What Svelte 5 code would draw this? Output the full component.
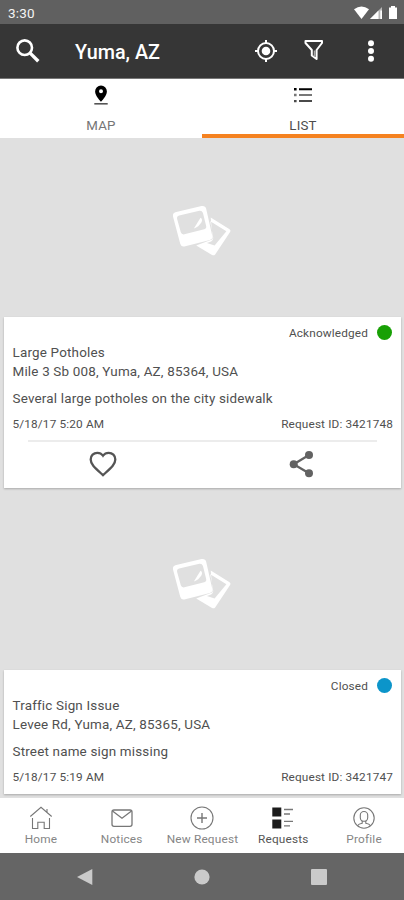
<script>
	const requests = [
		{
			id: '3421748',
			title: 'Large Potholes',
			address: 'Mile 3 Sb 008, Yuma, AZ, 85364, USA',
			description: 'Several large potholes on the city sidewalk',
			date: '5/18/17 5:20 AM',
			status: 'Acknowledged',
			actions: true
		},
		{
			id: '3421747',
			title: 'Traffic Sign Issue',
			address: 'Levee Rd, Yuma, AZ, 85365, USA',
			description: 'Street name sign missing',
			date: '5/18/17 5:19 AM',
			status: 'Closed',
			actions: false
		}
	];

	const navItems = ['Home', 'Notices', 'New Request', 'Requests', 'Profile'];

	let tab = 'list';
	let page = 'Requests';
</script>

<div class="app">
	<div class="status-bar">
		<span>3:30</span>
		<svg width="46" height="14" viewBox="0 0 46 14" fill="#fff">
			<path d="M0 3.2Q7.5-2.4 15 3.2L7.5 13z" />
			<path d="M16 13L28 1v12z" fill-opacity=".55" />
			<path d="M16 13L24.5 4.5V13zM26.3 4.5h1.7V13h-1.7z" />
			<path d="M35 1.5h2V0h4v1.5h2V13h-8z" />
		</svg>
	</div>

	<header>
		<svg class="search" width="26" height="26" viewBox="0 0 26 26" fill="none" stroke="#fff">
			<circle cx="9.7" cy="9.7" r="7.3" stroke-width="2.6" />
			<path d="M14.9 14.9L23.3 23.3" stroke-width="3.4" />
		</svg>
		<h1>Yuma, AZ</h1>
		<svg class="locate" width="24" height="24" viewBox="0 0 24 24" fill="none" stroke="#fff" stroke-width="2">
			<circle cx="12" cy="12" r="8" />
			<circle cx="12" cy="12" r="4.3" fill="#fff" stroke="none" />
			<path d="M12 1v3M12 20v3M1 12h3M20 12h3" />
		</svg>
		<svg class="filter" width="20" height="22" viewBox="0 0 20 22" fill="none" stroke="#fff" stroke-width="2" stroke-linejoin="round">
			<path d="M1.5 2h16.5v2L12.6 11v9L7.8 16.5V11L1.5 4z" />
			<path d="M10.5 11.5v6" stroke="#aaa" stroke-width="1.6" />
		</svg>
		<svg class="more" width="8" height="24" viewBox="0 0 8 24" fill="#fff">
			<circle cx="4" cy="4.2" r="3" />
			<circle cx="4" cy="12" r="3" />
			<circle cx="4" cy="19.8" r="3" />
		</svg>
	</header>

	<div class="tabs">
		<button class:active={tab === 'map'} on:click={() => (tab = 'map')}>
			<svg width="20" height="22" viewBox="0 0 20 22">
				<path d="M10 .6a5.9 5.9 0 0 0-5.9 5.9C4.1 10.8 10 16.8 10 16.8s5.9-6 5.9-10.3A5.9 5.9 0 0 0 10 .6zm0 7.7a2 2 0 1 1 0-4A2 2 0 0 1 10 8.3z" />
				<path d="M3.3 18h13.4v1.6H3.3z" fill="#555" />
			</svg>
			<span>MAP</span>
		</button>
		<button class:active={tab === 'list'} on:click={() => (tab = 'list')}>
			<svg width="20" height="22" viewBox="0 0 20 22">
				<path d="M1 3h2.6v2.5H1zM6 3.3h13v2H6z" />
				<path d="M1 8.8h2.6v2.4H1zM6 9h13v2H6z" fill="#777" />
				<path d="M1 15h2.6v2.3H1zM6 15.1h13v2H6z" fill="#4a4a4a" />
			</svg>
			<span>LIST</span>
		</button>
	</div>

	<main>
		{#each requests as request}
			<section>
				<div class="photo">
					<svg width="60" height="54" viewBox="0 0 62 54">
						<path
							fill="#fff"
							fill-rule="evenodd"
							d="M40 13L59.5 25.2Q61 26.3 60.2 27.8L44.6 51.2Q43.2 52.8 41.4 51.8L25 42L42 35.5zM39.5 16.8L42.6 34.2Q42.8 36.8 40.4 37.8L36 39.5L44 42L56.2 27.2z"
						/>
						<path
							fill="#fff"
							fill-rule="evenodd"
							d="M3.4 7.7L30.5 1.2Q34.3 .4 35.3 4L41.6 32Q42.3 35.3 39.2 36.3L12.7 43Q9.5 43.6 8.5 40.2L1.1 12.2Q.4 8.7 3.4 7.7zM7.4 11Q4.7 11.9 5.3 14.5L9.1 28.3Q10 31 12.8 30.4L33.3 25.3Q35.9 24.4 35.3 21.8L32 8.5Q31 5.7 28.3 6.1Z"
						/>
						<path d="M22.6 24.5L29.5 13.2Q32 14.8 30.4 18Q27.5 22.8 22.6 24.5z" fill="#fff" />
					</svg>
				</div>
				<article>
					<div class="state">
						{request.status}
						<i class={request.status.toLowerCase()}></i>
					</div>
					<p>{request.title}</p>
					<p>{request.address}</p>
					<p class="description">{request.description}</p>
					<div class="meta">
						<span>{request.date}</span>
						<span>Request ID: {request.id}</span>
					</div>
					{#if request.actions}
						<div class="actions">
							<svg width="28" height="26" viewBox="0 0 28 26" fill="none" stroke="#555" stroke-width="2.3">
								<path d="M14 24.2L12.2 22.5C5.7 16.7 1.7 13.2 1.7 8.4C1.7 4.6 4.6 1.8 8.3 1.8C10.5 1.8 12.7 2.9 14 4.7C15.3 2.9 17.5 1.8 19.7 1.8C23.4 1.8 26.3 4.6 26.3 8.4C26.3 13.2 22.3 16.7 15.8 22.5z" />
							</svg>
							<svg width="26" height="28" viewBox="0 0 26 28" fill="#626262">
								<path d="M22 5.1L6.7 14.2L22 23.3" fill="none" stroke="#626262" stroke-width="2.3" />
								<circle cx="22" cy="5.1" r="4" />
								<circle cx="6.7" cy="14.2" r="4" />
								<circle cx="22" cy="23.3" r="4" />
							</svg>
						</div>
					{/if}
				</article>
			</section>
		{/each}
	</main>

	<nav>
		{#each navItems as item}
			<button class:active={page === item} on:click={() => (page = item)}>
				<svg width="26" height="26" viewBox="0 0 26 26" fill="none" stroke="#777" stroke-width="1.1">
					{#if item === 'Home'}
						<path d="M2.3 11.5L13 2.3L23.7 11.5M4.5 13v10.5h5.3v-6.3h6.4v6.3h5.3V13M19 4v3" />
					{:else if item === 'Notices'}
						<rect x="3" y="5" width="20" height="16.3" rx="2" stroke-width="1.3" />
						<path d="M3.5 6L13 13.3L22.5 6" stroke-width="1.3" />
					{:else if item === 'New Request'}
						<circle cx="13" cy="13" r="11" />
						<path d="M13 8v10M8 13h10" stroke-width="1.4" />
					{:else if item === 'Requests'}
						<path d="M2.3 2.5h9v9h-9zM2.3 14.5h9v9h-9z" fill="#1c1c1c" stroke="none" />
						<path d="M14 4.5h9M14 9h6M14 16.3h9M14 20.8h6" stroke-width="1.3" />
					{:else}
						<circle cx="13" cy="13" r="10.2" />
						<rect x="9.3" y="6.5" width="7.4" height="9.8" rx="3.6" />
						<path d="M11.2 16v2.2Q7.7 18.7 6.4 20.7M14.8 16v2.2Q18.3 18.7 19.6 20.7" />
					{/if}
				</svg>
				<span>{item}</span>
			</button>
		{/each}
	</nav>

	<footer>
		<svg width="16" height="18" viewBox="0 0 16 18"><path d="M15.3 1v16L0 9z" /></svg>
		<svg width="16" height="16" viewBox="0 0 16 16"><circle cx="8" cy="8" r="7.6" /></svg>
		<svg width="16" height="16" viewBox="0 0 16 16"><rect width="16" height="16" rx="1" /></svg>
	</footer>
</div>

<style>
	:global(body) {
		margin: 0;
	}
	.app {
		display: flex;
		flex-direction: column;
		height: 900px;
		overflow: hidden;
		background: #e0e0e0;
		color: #505050;
		font-family: Roboto, sans-serif;
	}
	svg {
		display: block;
		flex: none;
	}
	button {
		padding: 0;
		border: 0;
		background: none;
		font: inherit;
	}
	.status-bar {
		display: flex;
		flex: none;
		align-items: center;
		justify-content: space-between;
		box-sizing: border-box;
		height: 24px;
		padding: 1px 4px 0 8px;
		background: #606060;
		color: #f4f4f4;
		font-size: 13.5px;
		letter-spacing: 0.2px;
	}
	header {
		display: flex;
		flex: none;
		align-items: center;
		box-sizing: border-box;
		height: 55px;
		padding: 0 29px 0 15px;
		background: #363636;
		border-bottom: 1px solid #777;
	}
	h1 {
		flex: 1;
		margin: 2px 0 0 34px;
		color: #fff;
		font-size: 19.8px;
		font-weight: 500;
	}
	.filter {
		margin: 0 43px 2px 26px;
	}
	.tabs {
		display: grid;
		flex: none;
		grid-template-columns: 1fr 1fr;
		height: 59px;
		background: #fff;
	}
	.tabs button {
		display: flex;
		flex-direction: column;
		align-items: center;
		padding-top: 6px;
		border-bottom: 4px solid transparent;
		color: #757575;
		font-size: 13.3px;
		line-height: 16px;
		letter-spacing: 0.2px;
		gap: 11px;
	}
	.tabs .active {
		border-bottom-color: #f58220;
		color: #4c4c4c;
	}
	main {
		flex: 1;
		min-height: 0;
		overflow: hidden;
		padding-top: 1px;
	}
	section {
		margin-bottom: 4px;
	}
	.photo {
		display: flex;
		align-items: center;
		justify-content: center;
		height: 178px;
		padding-top: 6px;
		box-sizing: border-box;
	}
	article {
		margin: 0 3px 0 4px;
		padding: 6px 8px 8px 9px;
		background: #fff;
		box-shadow: 0 1px 2px rgba(0, 0, 0, 0.25);
		font-size: 13.45px;
		letter-spacing: 0.18px;
	}
	.state {
		display: flex;
		align-items: center;
		justify-content: flex-end;
		height: 19px;
		padding-right: 1px;
		font-size: 11.8px;
		letter-spacing: 0.15px;
		gap: 9px;
	}
	.state i {
		width: 15px;
		height: 15px;
		border-radius: 50%;
	}
	.acknowledged {
		background: #18a005;
	}
	.closed {
		background: #0c95ca;
	}
	p {
		margin: 0 0 0 -0.5px;
		line-height: 19px;
	}
	.state + p {
		margin-top: 1px;
	}
	.description {
		margin-top: 8px;
	}
	.meta {
		display: flex;
		justify-content: space-between;
		margin: 7px 0 0 -0.5px;
		font-size: 11.8px;
		line-height: 18px;
		letter-spacing: 0.15px;
	}
	.actions {
		display: grid;
		grid-template-columns: 1fr 1fr;
		place-items: center;
		box-sizing: border-box;
		height: 48px;
		margin: 7px -5px -8px -9px;
		background: linear-gradient(#ececec, #ececec) 24px 0 / 349px 2px no-repeat;
	}
	nav {
		display: grid;
		flex: none;
		grid-template-columns: repeat(5, 1fr);
		height: 55px;
		background: #fff;
	}
	nav button {
		display: flex;
		flex-direction: column;
		align-items: center;
		padding: 7px 0 0 1px;
		color: #858585;
		font-size: 11.8px;
		line-height: 14px;
		letter-spacing: 0.2px;
		gap: 1px;
		white-space: nowrap;
	}
	nav .active {
		color: #555;
	}
	footer {
		display: flex;
		flex: none;
		align-items: center;
		justify-content: space-between;
		box-sizing: border-box;
		height: 47px;
		padding: 0 77px;
		background: #656565;
		fill: #cacaca;
	}
</style>
